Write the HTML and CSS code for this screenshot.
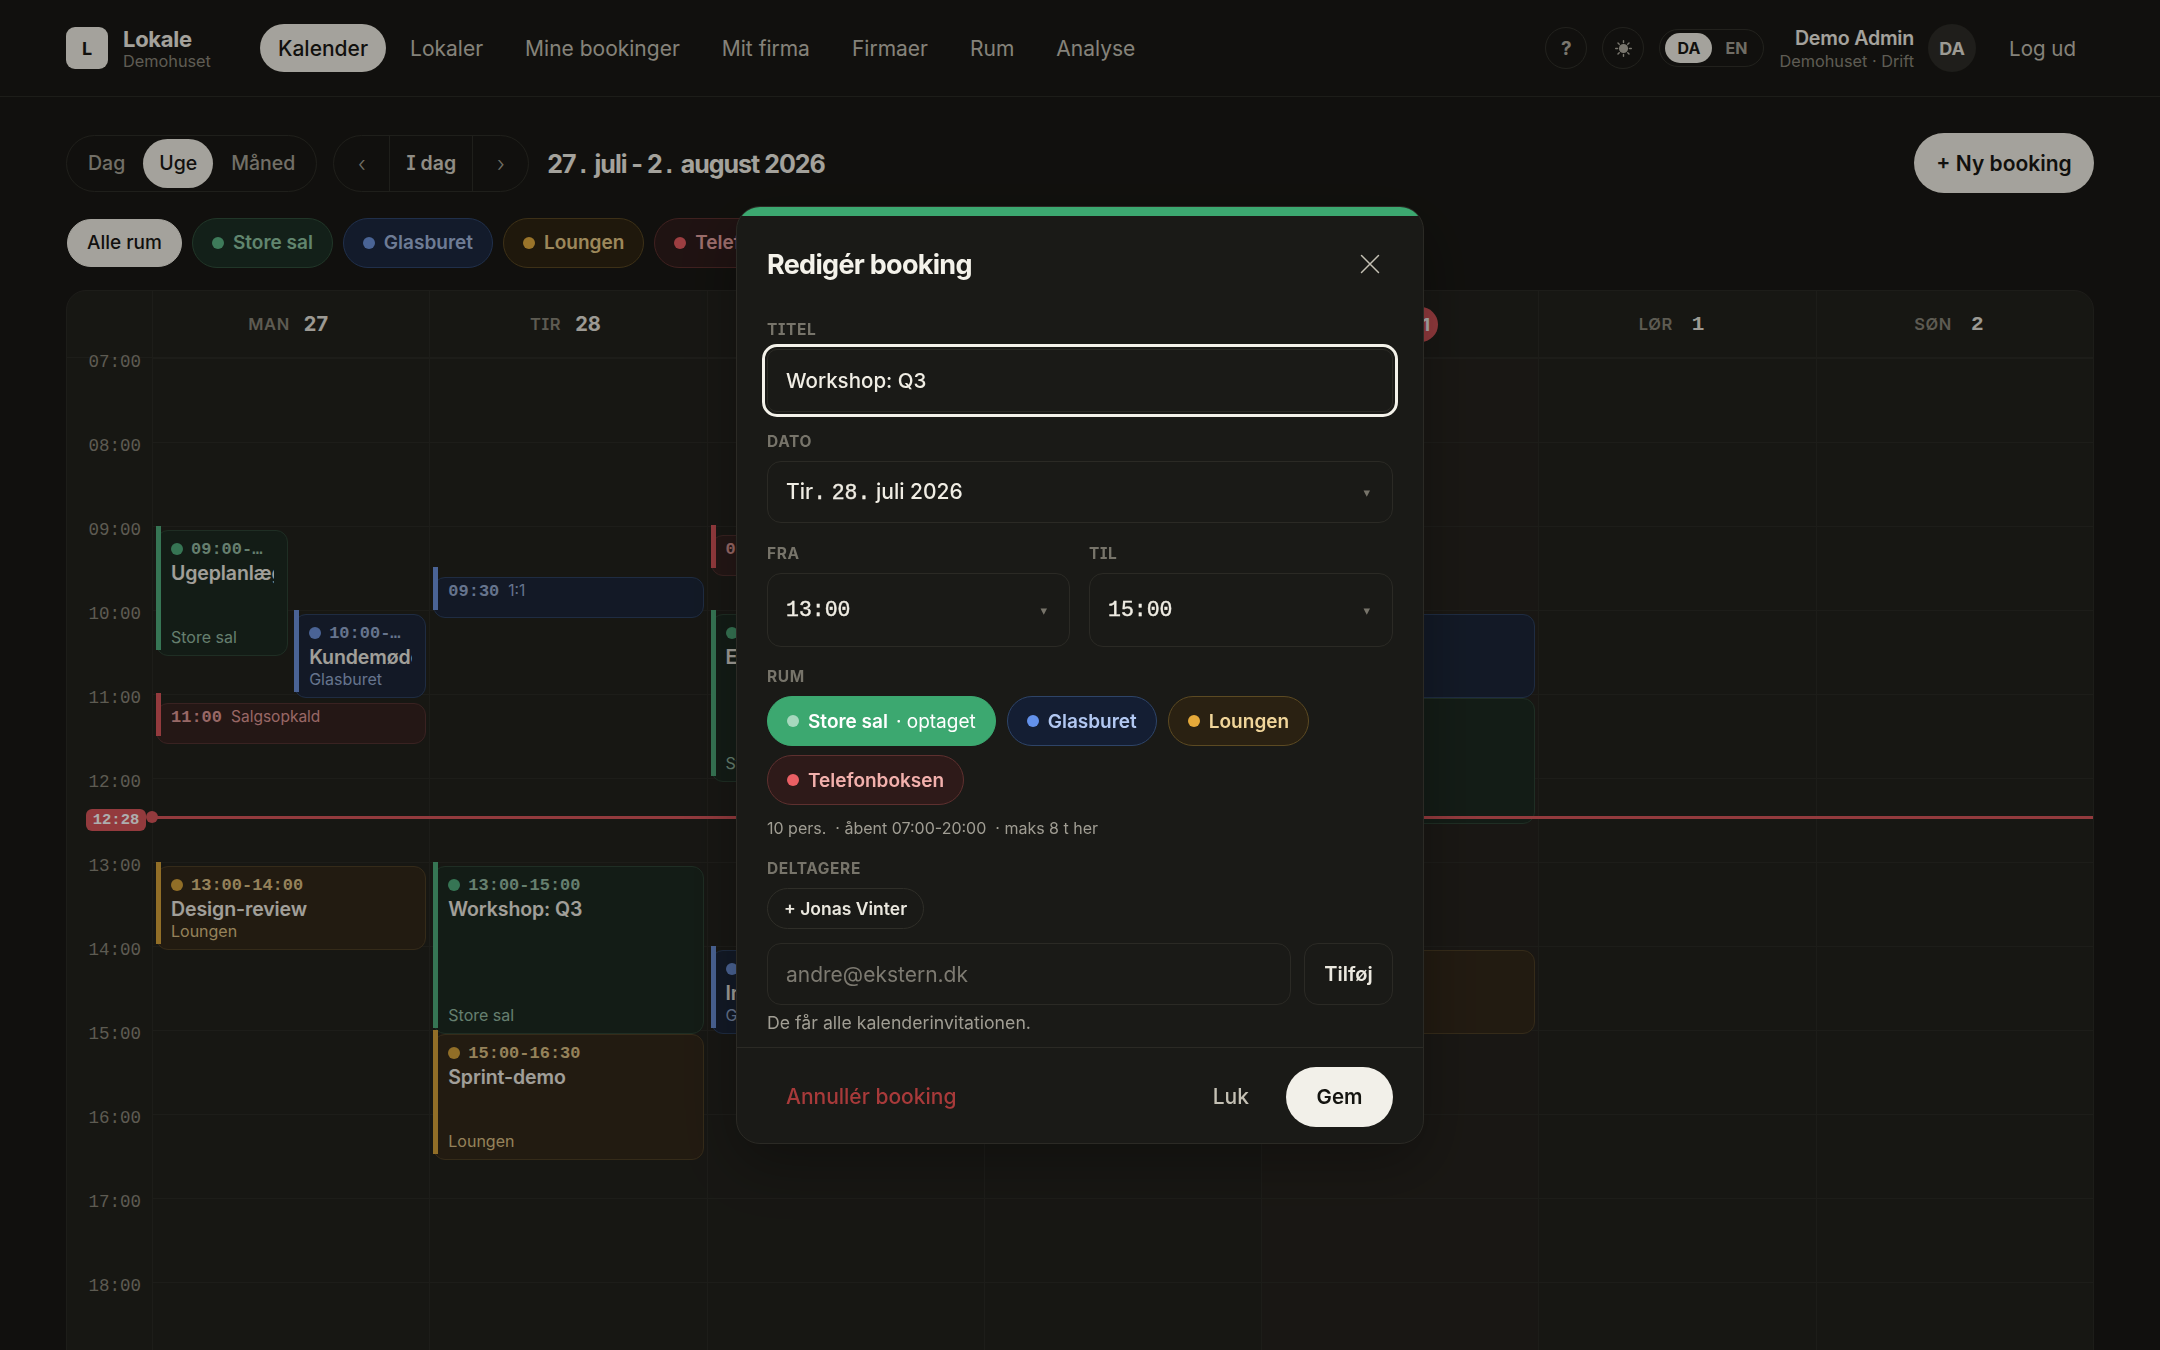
FILE: index.html
```html
<!DOCTYPE html>
<html lang="da">
<head>
  <meta charset="UTF-8" />
  <meta name="viewport" content="width=device-width, initial-scale=1.0" />
  <title>Lokale - Kalender</title>
  <link rel="stylesheet" href="styles.css">
</head>
<body>
  <header class="topbar">
    <div class="brand">
      <div class="logo">L</div>
      <div class="brand-text">
        <div class="brand-name">Lokale</div>
        <div class="brand-sub">Demohuset</div>
      </div>
    </div>
    <nav class="nav">
      <a class="nav-item active">Kalender</a>
      <a class="nav-item">Lokaler</a>
      <a class="nav-item">Mine bookinger</a>
      <a class="nav-item">Mit firma</a>
      <a class="nav-item">Firmaer</a>
      <a class="nav-item">Rum</a>
      <a class="nav-item">Analyse</a>
    </nav>
    <div class="top-right">
      <button class="round-btn">?</button>
      <button class="round-btn">
        <svg width="17" height="17" viewBox="0 0 24 24" fill="none" stroke="currentColor" stroke-width="2" stroke-linecap="round">
          <circle cx="12" cy="12" r="6.5" fill="currentColor" stroke="none"/>
          <path d="M12 1v2.5M12 20.5V23M1 12h2.5M20.5 12H23M4.2 4.2l1.8 1.8M18 18l1.8 1.8M4.2 19.8L6 18M18 6l1.8-1.8"/>
        </svg>
      </button>
      <div class="lang">
        <span class="lang-item active">DA</span>
        <span class="lang-item">EN</span>
      </div>
      <div class="user">
        <div class="user-name">Demo Admin</div>
        <div class="user-sub">Demohuset · Drift</div>
      </div>
      <div class="avatar">DA</div>
      <a class="logout">Log ud</a>
    </div>
  </header>

  <main class="main">
    <div class="toolbar">
      <div class="seg">
        <span class="seg-item">Dag</span>
        <span class="seg-item active">Uge</span>
        <span class="seg-item">Måned</span>
      </div>
      <div class="pager">
        <span class="pager-arrow">‹</span>
        <span class="pager-today">I dag</span>
        <span class="pager-arrow">›</span>
      </div>
      <h2 class="range">27<span class="mono">.</span> juli - 2<span class="mono">.</span> august 2026</h2>
      <button class="new-btn">+ Ny booking</button>
    </div>

    <div class="filters">
      <span class="chip all">Alle rum</span>
      <span class="chip green"><i class="dot"></i>Store sal</span>
      <span class="chip blue"><i class="dot"></i>Glasburet</span>
      <span class="chip amber"><i class="dot"></i>Loungen</span>
      <span class="chip red"><i class="dot"></i>Telefonboksen</span>
    </div>

    <section class="panel">
      <div class="head-row">
        <div class="head-spacer"></div>
        <div class="head-day"><span class="dow">MAN</span><span class="dnum">27</span></div>
        <div class="head-day"><span class="dow">TIR</span><span class="dnum">28</span></div>
        <div class="head-day"><span class="dow">ONS</span><span class="dnum">29</span></div>
        <div class="head-day"><span class="dow">TOR</span><span class="dnum">30</span></div>
        <div class="head-day"><span class="dow">FRE</span><span class="dnum today">31</span></div>
        <div class="head-day"><span class="dow">LØR</span><span class="dnum single">1</span></div>
        <div class="head-day"><span class="dow">SØN</span><span class="dnum single">2</span></div>
      </div>
      <div class="week">
        <div class="hours">
          <div class="hour"><span>07:00</span></div>
          <div class="hour"><span>08:00</span></div>
          <div class="hour"><span>09:00</span></div>
          <div class="hour"><span>10:00</span></div>
          <div class="hour"><span>11:00</span></div>
          <div class="hour"><span>12:00</span></div>
          <div class="hour"><span>13:00</span></div>
          <div class="hour"><span>14:00</span></div>
          <div class="hour"><span>15:00</span></div>
          <div class="hour"><span>16:00</span></div>
          <div class="hour"><span>17:00</span></div>
          <div class="hour"><span>18:00</span></div>
        </div>

        <div class="day">
          <div class="ev green half-a" style="top:168px;height:126px">
            <div class="ev-body">
              <div class="ev-time"><i class="dot"></i>09:00-…</div>
              <div class="ev-title">Ugeplanlægning</div>
              <div class="ev-room">Store sal</div>
            </div>
          </div>
          <div class="ev blue half-b" style="top:252px;height:84px">
            <div class="ev-body">
              <div class="ev-time"><i class="dot"></i>10:00-…</div>
              <div class="ev-title">Kundemøde</div>
              <div class="ev-room">Glasburet</div>
            </div>
          </div>
          <div class="ev red short" style="top:336px">
            <div class="ev-body"><span class="ev-time">11:00</span><span class="ev-name">Salgsopkald</span></div>
          </div>
          <div class="ev amber" style="top:504px;height:84px">
            <div class="ev-body">
              <div class="ev-time"><i class="dot"></i>13:00-14:00</div>
              <div class="ev-title">Design-review</div>
              <div class="ev-room">Loungen</div>
            </div>
          </div>
        </div>

        <div class="day">
          <div class="ev blue short" style="top:210px">
            <div class="ev-body"><span class="ev-time">09:30</span><span class="ev-name">1:1</span></div>
          </div>
          <div class="ev green" style="top:504px;height:168px">
            <div class="ev-body">
              <div class="ev-time"><i class="dot"></i>13:00-15:00</div>
              <div class="ev-title">Workshop: Q3</div>
              <div class="ev-room">Store sal</div>
            </div>
          </div>
          <div class="ev amber" style="top:672px;height:126px">
            <div class="ev-body">
              <div class="ev-time"><i class="dot"></i>15:00-16:30</div>
              <div class="ev-title">Sprint-demo</div>
              <div class="ev-room">Loungen</div>
            </div>
          </div>
        </div>

        <div class="day">
          <div class="ev red short" style="top:168px">
            <div class="ev-body"><span class="ev-time">09:00</span><span class="ev-name">Opkald</span></div>
          </div>
          <div class="ev green" style="top:252px;height:168px">
            <div class="ev-body">
              <div class="ev-time"><i class="dot"></i>10:00-12:00</div>
              <div class="ev-title">Evaluering</div>
              <div class="ev-room">Store sal</div>
            </div>
          </div>
          <div class="ev blue" style="top:588px;height:84px">
            <div class="ev-body">
              <div class="ev-time"><i class="dot"></i>14:00-15:00</div>
              <div class="ev-title">Interview</div>
              <div class="ev-room">Glasburet</div>
            </div>
          </div>
        </div>

        <div class="day"></div>

        <div class="day today-col">
          <div class="ev blue" style="top:252px;height:84px"></div>
          <div class="ev green" style="top:336px;height:126px"></div>
          <div class="ev amber" style="top:588px;height:84px"></div>
        </div>

        <div class="day"></div>
        <div class="day"></div>

        <div class="now">
          <span class="now-label">12:28</span>
          <span class="now-dot"></span>
        </div>
      </div>
    </section>
  </main>

  <div class="overlay">
    <div class="modal">
      <div class="modal-bar"></div>
      <div class="modal-head">
        <h3 class="modal-title">Redigér booking</h3>
        <button class="close-btn">
          <svg width="20" height="20" viewBox="0 0 20 20" fill="none" stroke="currentColor" stroke-width="1.5" stroke-linecap="round">
            <path d="M1.5 1.5l17 17M18.5 1.5l-17 17"/>
          </svg>
        </button>
      </div>

      <div class="modal-body">
        <div class="label">TITEL</div>
        <div class="field focus">Workshop: Q3</div>

        <div class="label mt">DATO</div>
        <div class="field select">
          <span>Tir<span class="mono">.</span> <span class="mono">28.</span> juli 2026</span>
          <span class="caret">▾</span>
        </div>

        <div class="time-row">
          <div class="time-col">
            <div class="label">FRA</div>
            <div class="field select tall"><span class="mono">13:00</span><span class="caret">▾</span></div>
          </div>
          <div class="time-col">
            <div class="label">TIL</div>
            <div class="field select tall"><span class="mono">15:00</span><span class="caret">▾</span></div>
          </div>
        </div>

        <div class="label mt">RUM</div>
        <div class="room-chips">
          <span class="chip picked"><i class="dot"></i>Store sal<span class="busy">· optaget</span></span>
          <span class="chip blue bright"><i class="dot"></i>Glasburet</span>
          <span class="chip amber bright"><i class="dot"></i>Loungen</span>
          <span class="chip red bright"><i class="dot"></i>Telefonboksen</span>
        </div>
        <div class="room-info">10 pers. &nbsp;· åbent 07:00-20:00 &nbsp;· maks 8 t her</div>

        <div class="label people">DELTAGERE</div>
        <span class="person">+ Jonas Vinter</span>
        <div class="add-row">
          <div class="field grow placeholder">andre@ekstern.dk</div>
          <button class="add-btn">Tilføj</button>
        </div>
        <div class="hint">De får alle kalenderinvitationen.</div>
      </div>

      <div class="modal-foot">
        <button class="link-btn danger">Annullér booking</button>
        <button class="link-btn">Luk</button>
        <button class="save-btn">Gem</button>
      </div>
    </div>
  </div>
</body>
</html>
```

FILE: styles.css
```css
* {
  box-sizing: border-box;
}
html, body {
  height: 100%;
}
body {
  margin: 0;
  overflow: hidden;
  background: #1a1915;
  color: #f2efe6;
  font-family: Inter, "Noto Sans", sans-serif;
}
button {
  font-family: inherit;
  border: none;
  background: none;
  color: inherit;
  padding: 0;
}
.mono {
  font-family: "Liberation Mono", monospace;
}

/* top bar */
.topbar {
  height: 97px;
  padding: 0 66px;
  display: flex;
  align-items: center;
  border-bottom: 1px solid #2c2b26;
}
.brand {
  display: flex;
  align-items: center;
  gap: 15px;
  width: 194px;
}
.logo {
  width: 42px;
  height: 42px;
  border-radius: 9px;
  background: #f2efe6;
  color: #1a1915;
  font-weight: 700;
  font-size: 18px;
  display: flex;
  align-items: center;
  justify-content: center;
}
.brand-name {
  font-size: 22px;
  font-weight: 700;
  letter-spacing: -.3px;
  line-height: 26px;
}
.brand-sub {
  font-size: 16.3px;
  line-height: 19px;
  color: #8c887c;
}
.nav {
  display: flex;
  gap: 6px;
}
.nav-item {
  height: 48px;
  padding: 0 18px;
  border-radius: 24px;
  font-size: 21px;
  display: flex;
  align-items: center;
  color: #c4c0b4;
}
.nav-item.active {
  background: #f2efe6;
  color: #1a1915;
  font-weight: 500;
}
.top-right {
  margin-left: auto;
  display: flex;
  align-items: center;
}
.round-btn {
  width: 42px;
  height: 42px;
  border-radius: 50%;
  border: 1px solid #33322c;
  margin-right: 15px;
  color: #b3afa3;
  font-size: 19px;
  font-weight: 700;
  display: flex;
  align-items: center;
  justify-content: center;
}
.lang {
  height: 38px;
  width: 105px;
  padding: 3px 5px;
  border: 1px solid #33322c;
  border-radius: 19px;
  display: flex;
  align-items: center;
  gap: 2px;
}
.lang-item {
  flex: 1;
  height: 30px;
  border-radius: 15px;
  font-size: 16px;
  font-weight: 700;
  display: flex;
  align-items: center;
  justify-content: center;
  color: #a5a195;
}
.lang-item.active {
  flex: 0 0 47px;
  background: #f2efe6;
  color: #1a1915;
}
.user {
  margin-left: 15px;
  text-align: right;
}
.user-name {
  font-size: 19.6px;
  font-weight: 600;
  line-height: 25px;
  color: #f2efe6;
  letter-spacing: -.2px;
}
.user-sub {
  font-size: 16.3px;
  line-height: 20px;
  color: #8c887c;
}
.avatar {
  width: 48px;
  height: 48px;
  margin-left: 14px;
  border-radius: 50%;
  background: #2e2d28;
  font-size: 18px;
  font-weight: 700;
  color: #e6e3da;
  display: flex;
  align-items: center;
  justify-content: center;
}
.logout {
  margin-left: 33px;
  margin-right: 18px;
  font-size: 20.5px;
  color: #c4c0b4;
}

/* page */
.main {
  padding: 36px 66px 0;
}
.toolbar {
  height: 60px;
  display: flex;
  align-items: center;
}
.seg, .pager {
  height: 57px;
  border: 1px solid #2f2e28;
  border-radius: 29px;
  display: flex;
  align-items: center;
  font-size: 19.5px;
}
.seg {
  padding: 0 3px;
}
.seg-item {
  height: 49px;
  padding: 0 18px;
  border-radius: 25px;
  font-weight: 500;
  color: #a8a498;
  display: flex;
  align-items: center;
}
.seg-item.active {
  padding: 0 16px;
  background: #f2efe6;
  color: #1a1915;
}
.pager {
  margin-left: 16px;
}
.pager-arrow {
  width: 55px;
  height: 100%;
  font-size: 21px;
  font-weight: 300;
  color: #a8a498;
  display: flex;
  align-items: center;
  justify-content: center;
}
.pager-today {
  width: 84px;
  height: 100%;
  font-weight: 600;
  color: #d4d0c4;
  border: solid #2f2e28;
  border-width: 0 1px;
  font-feature-settings: "cv08";
  display: flex;
  align-items: center;
  justify-content: center;
}
.range {
  margin: 3px 0 0 18px;
  font-size: 25px;
  font-weight: 700;
  letter-spacing: -1px;
  color: #f2efe6;
}
.new-btn {
  margin-left: auto;
  width: 180px;
  height: 60px;
  border-radius: 30px;
  background: #f2efe6;
  color: #1a1915;
  font-size: 21px;
  font-weight: 600;
}

/* chips */
.filters {
  margin-top: 24px;
  height: 51px;
  display: flex;
  align-items: center;
  gap: 10px;
  padding-left: 1px;
  white-space: nowrap;
}
.chip {
  height: 50px;
  padding: 0 19px;
  border: 1px solid;
  border-radius: 25px;
  display: inline-flex;
  align-items: center;
  gap: 9px;
  font-size: 19px;
  font-weight: 600;
}
.dot {
  flex: none;
  width: 12px;
  height: 12px;
  border-radius: 50%;
}
.chip.all {
  height: 48px;
  background: #f2efe6;
  border-color: #f2efe6;
  color: #1a1915;
  font-weight: 500;
}
.chip.green {
  background: #1d3025;
  border-color: #31503c;
  color: #8fc4a3;
}
.chip.green .dot {
  background: #5cb585;
}
.chip.blue {
  background: #1c2840;
  border-color: #30466e;
  color: #a2b7dc;
}
.chip.blue .dot {
  background: #6d94dc;
}
.chip.amber {
  background: #2e2413;
  border-color: #5b4822;
  color: #e6c987;
}
.chip.amber .dot {
  background: #e3ac3f;
}
.chip.red {
  background: #2f1c1b;
  border-color: #5e312f;
  color: #e8a3a0;
}
.chip.red .dot {
  background: #e65c60;
}
.chip.blue.bright {
  background: #141e33;
  border-color: #2e4468;
  color: #b2c8f2;
}
.chip.amber.bright {
  background: #2a2112;
  border-color: #5c4a22;
  color: #f0d59a;
}
.chip.red.bright {
  background: #2e1a19;
  border-color: #5e302f;
  color: #f2b0ac;
}
.chip.blue.bright .dot {
  background: #6391ea;
}
.chip.amber.bright .dot {
  background: #e5a93a;
}
.chip.red.bright .dot {
  background: #ea5f64;
}
.chip.picked {
  background: #3ca870;
  border-color: #3ca870;
  color: #fff;
}
.chip.picked .dot {
  background: rgba(255, 255, 255, .55);
}
.busy {
  font-weight: 400;
  margin-left: -1px;
}

/* calendar */
.panel {
  margin-top: 22px;
  height: 1100px;
  background: #23221d;
  border: 1px solid #2c2b26;
  border-radius: 20px;
  overflow: hidden;
}
.head-row {
  height: 67px;
  display: grid;
  grid-template-columns: 85px repeat(7, 1fr);
  border-bottom: 1px solid #2c2b26;
}
.head-day {
  border-left: 1px solid #2c2b26;
  padding-right: 6px;
  display: flex;
  align-items: center;
  justify-content: center;
  gap: 14px;
}
.dow {
  font-size: 16.5px;
  font-weight: 600;
  letter-spacing: .6px;
  color: #8a867a;
  font-feature-settings: "cv08";
}
.dnum {
  font-size: 20px;
  font-weight: 700;
  color: #e6e3da;
}
.dnum.single {
  margin-left: 5px;
  margin-right: 6px;
  font-family: "Liberation Mono", monospace;
  font-size: 21px;
}
.dnum.today {
  width: 35px;
  height: 35px;
  border-radius: 50%;
  background: #d9565b;
  color: #fff;
  font-size: 18px;
  display: flex;
  align-items: center;
  justify-content: center;
}
.week {
  position: relative;
  display: grid;
  grid-template-columns: 85px repeat(7, 1fr);
}
.hour {
  height: 84px;
  padding-right: 11px;
  text-align: right;
  font-family: "Liberation Mono", monospace;
  font-size: 17.5px;
  line-height: 20px;
  color: #8a867a;
}
.hour span {
  display: block;
  transform: translateY(-6px);
}
.day {
  position: relative;
  height: 1008px;
  border-left: 1px solid #2c2b26;
  background: repeating-linear-gradient(to bottom, #2c2b26 0, #2c2b26 1px, transparent 1px, transparent 84px);
}
.today-col {
  background-color: rgba(217, 86, 91, .02);
}

/* events */
.ev {
  position: absolute;
  left: 3px;
  right: 3px;
  margin-top: 4px;
  border: 1px solid;
  border-radius: 12px;
}
.ev::before {
  content: "";
  position: absolute;
  left: -1px;
  top: -5px;
  width: 5px;
  height: 100%;
}
.ev.half-a {
  right: calc(50% + 3px);
}
.ev.half-b {
  left: calc(50% + 3px);
}
.ev.short {
  margin-top: 9px;
  height: 41px;
}
.ev.short::before {
  top: -11px;
  height: 43px;
}
.ev-body {
  height: 100%;
  margin-right: 13px;
  padding: 8px 0 8px 14px;
  overflow: hidden;
  white-space: nowrap;
  display: flex;
  flex-direction: column;
}
.ev.short .ev-body {
  padding-top: 3px;
  flex-direction: row;
  align-items: baseline;
  gap: 9px;
}
.ev-time {
  height: 20px;
  display: flex;
  align-items: center;
  gap: 8px;
  font-family: "Liberation Mono", monospace;
  font-size: 17px;
  font-weight: 700;
}
.ev.short .ev-time {
  line-height: 20px;
  display: block;
}
.ev-name {
  font-size: 15.5px;
}
.ev-title {
  margin-top: 2px;
  font-size: 19.5px;
  font-weight: 600;
  line-height: 24px;
  color: #eeebe2;
  letter-spacing: -.1px;
}
.ev-room {
  margin-top: auto;
  font-size: 16px;
  line-height: 20px;
}
.ev.green {
  background: #1d2a21;
  border-color: #2e4435;
  color: #97bca4;
}
.ev.green::before,
.ev.green .dot {
  background: #50ad7c;
}
.ev.blue {
  background: #1c2639;
  border-color: #2e4262;
  color: #97abd0;
}
.ev.blue::before,
.ev.blue .dot {
  background: #6e93dc;
}
.ev.amber {
  background: #33281a;
  border-color: #4f4026;
  color: #dcc085;
}
.ev.amber::before,
.ev.amber .dot {
  background: #d6a23a;
}
.ev.red {
  background: #352220;
  border-color: #553331;
  color: #e09a97;
}
.ev.red::before {
  background: #d9565b;
}
.now {
  position: absolute;
  left: 85px;
  right: 0;
  top: 458px;
  height: 3px;
  background: #d9565b;
}
.now-label {
  position: absolute;
  left: -66px;
  top: -7px;
  width: 60px;
  height: 22px;
  border-radius: 6px;
  background: #d9565b;
  color: #fff;
  font-family: "Liberation Mono", monospace;
  font-size: 15.5px;
  font-weight: 700;
  line-height: 23px;
  text-align: center;
}
.now-dot {
  position: absolute;
  left: -6px;
  top: -5px;
  width: 12px;
  height: 12px;
  border-radius: 50%;
  background: #d9565b;
}

/* modal */
.overlay {
  position: fixed;
  inset: 0;
  background: rgba(0, 0, 0, .32);
  display: flex;
  align-items: center;
  justify-content: center;
}
.modal {
  width: 688px;
  background: #1a1a17;
  border: 1px solid #2b2a25;
  border-radius: 24px;
  overflow: hidden;
  box-shadow: 0 20px 60px rgba(0, 0, 0, .3);
}
.modal-bar {
  height: 9px;
  background: #3ca870;
}
.modal-head {
  padding: 27px 30px 0;
  height: 69px;
  display: flex;
  align-items: center;
  justify-content: space-between;
}
.modal-title {
  margin: 0;
  font-size: 27px;
  font-weight: 700;
  letter-spacing: -.7px;
  color: #f4f2ea;
}
.close-btn {
  width: 20px;
  height: 20px;
  margin-right: 13px;
  color: #c4c0b4;
}
.modal-body {
  padding: 36px 30px 13px;
  display: flex;
  flex-direction: column;
  align-items: stretch;
}
.label {
  height: 18px;
  margin-bottom: 10px;
  font-size: 15.5px;
  font-weight: 700;
  line-height: 18px;
  letter-spacing: .6px;
  color: #77746a;
  font-feature-settings: "cv08";
}
.label.mt {
  margin-top: 21px;
}
.time-row {
  margin-top: 22px;
  display: grid;
  grid-template-columns: 303px 304px;
  gap: 19px;
}
.field {
  height: 62px;
  padding: 0 18px;
  border: 1px solid #2b2a25;
  border-radius: 14px;
  font-size: 21px;
  font-weight: 500;
  color: #f0ede4;
  display: flex;
  align-items: center;
}
.field.focus {
  height: 63px;
  font-size: 20.5px;
  outline: 3px solid #f4f2ea;
  outline-offset: 2px;
  border-radius: 10px;
}
.field.select {
  justify-content: space-between;
}
.field.tall {
  height: 74px;
}
.field .mono {
  font-size: 21.5px;
  -webkit-text-stroke: .4px currentColor;
}
.caret {
  font-family: "DejaVu Sans", sans-serif;
  font-size: 13px;
  color: #77746a;
  margin-right: 4px;
}
.room-chips {
  display: flex;
  flex-wrap: wrap;
  gap: 9px 11px;
}
.room-info {
  margin-top: 12px;
  font-size: 16px;
  line-height: 22px;
  color: #a09d93;
}
.label.people {
  margin-top: 21px;
}
.person {
  align-self: flex-start;
  height: 41px;
  padding: 0 16px;
  border: 1px solid #2f2e28;
  border-radius: 21px;
  font-size: 17.5px;
  font-weight: 600;
  display: flex;
  align-items: center;
  color: #ebe8df;
}
.add-row {
  margin-top: 14px;
  display: flex;
  gap: 13px;
}
.grow {
  flex: 1;
}
.field.placeholder {
  font-weight: 400;
  color: #7d7a71;
}
.add-btn {
  width: 89px;
  height: 62px;
  border: 1px solid #2b2a25;
  border-radius: 14px;
  font-size: 20px;
  font-weight: 600;
  color: #ebe8df;
}
.hint {
  margin-top: 7px;
  font-size: 17.7px;
  line-height: 22px;
  color: #a09d93;
}
.modal-foot {
  height: 96px;
  padding: 2px 30px 0;
  border-top: 1px solid #2b2a25;
  display: flex;
  align-items: center;
}
.link-btn {
  padding: 0 19px;
  font-size: 21px;
  font-weight: 500;
  color: #c4c0b4;
}
.link-btn.danger {
  margin-right: auto;
  color: #a83a3a;
}
.save-btn {
  width: 107px;
  height: 60px;
  margin-left: 18px;
  border-radius: 30px;
  background: #f2f0e9;
  color: #141410;
  font-size: 20.5px;
  font-weight: 600;
}
```
